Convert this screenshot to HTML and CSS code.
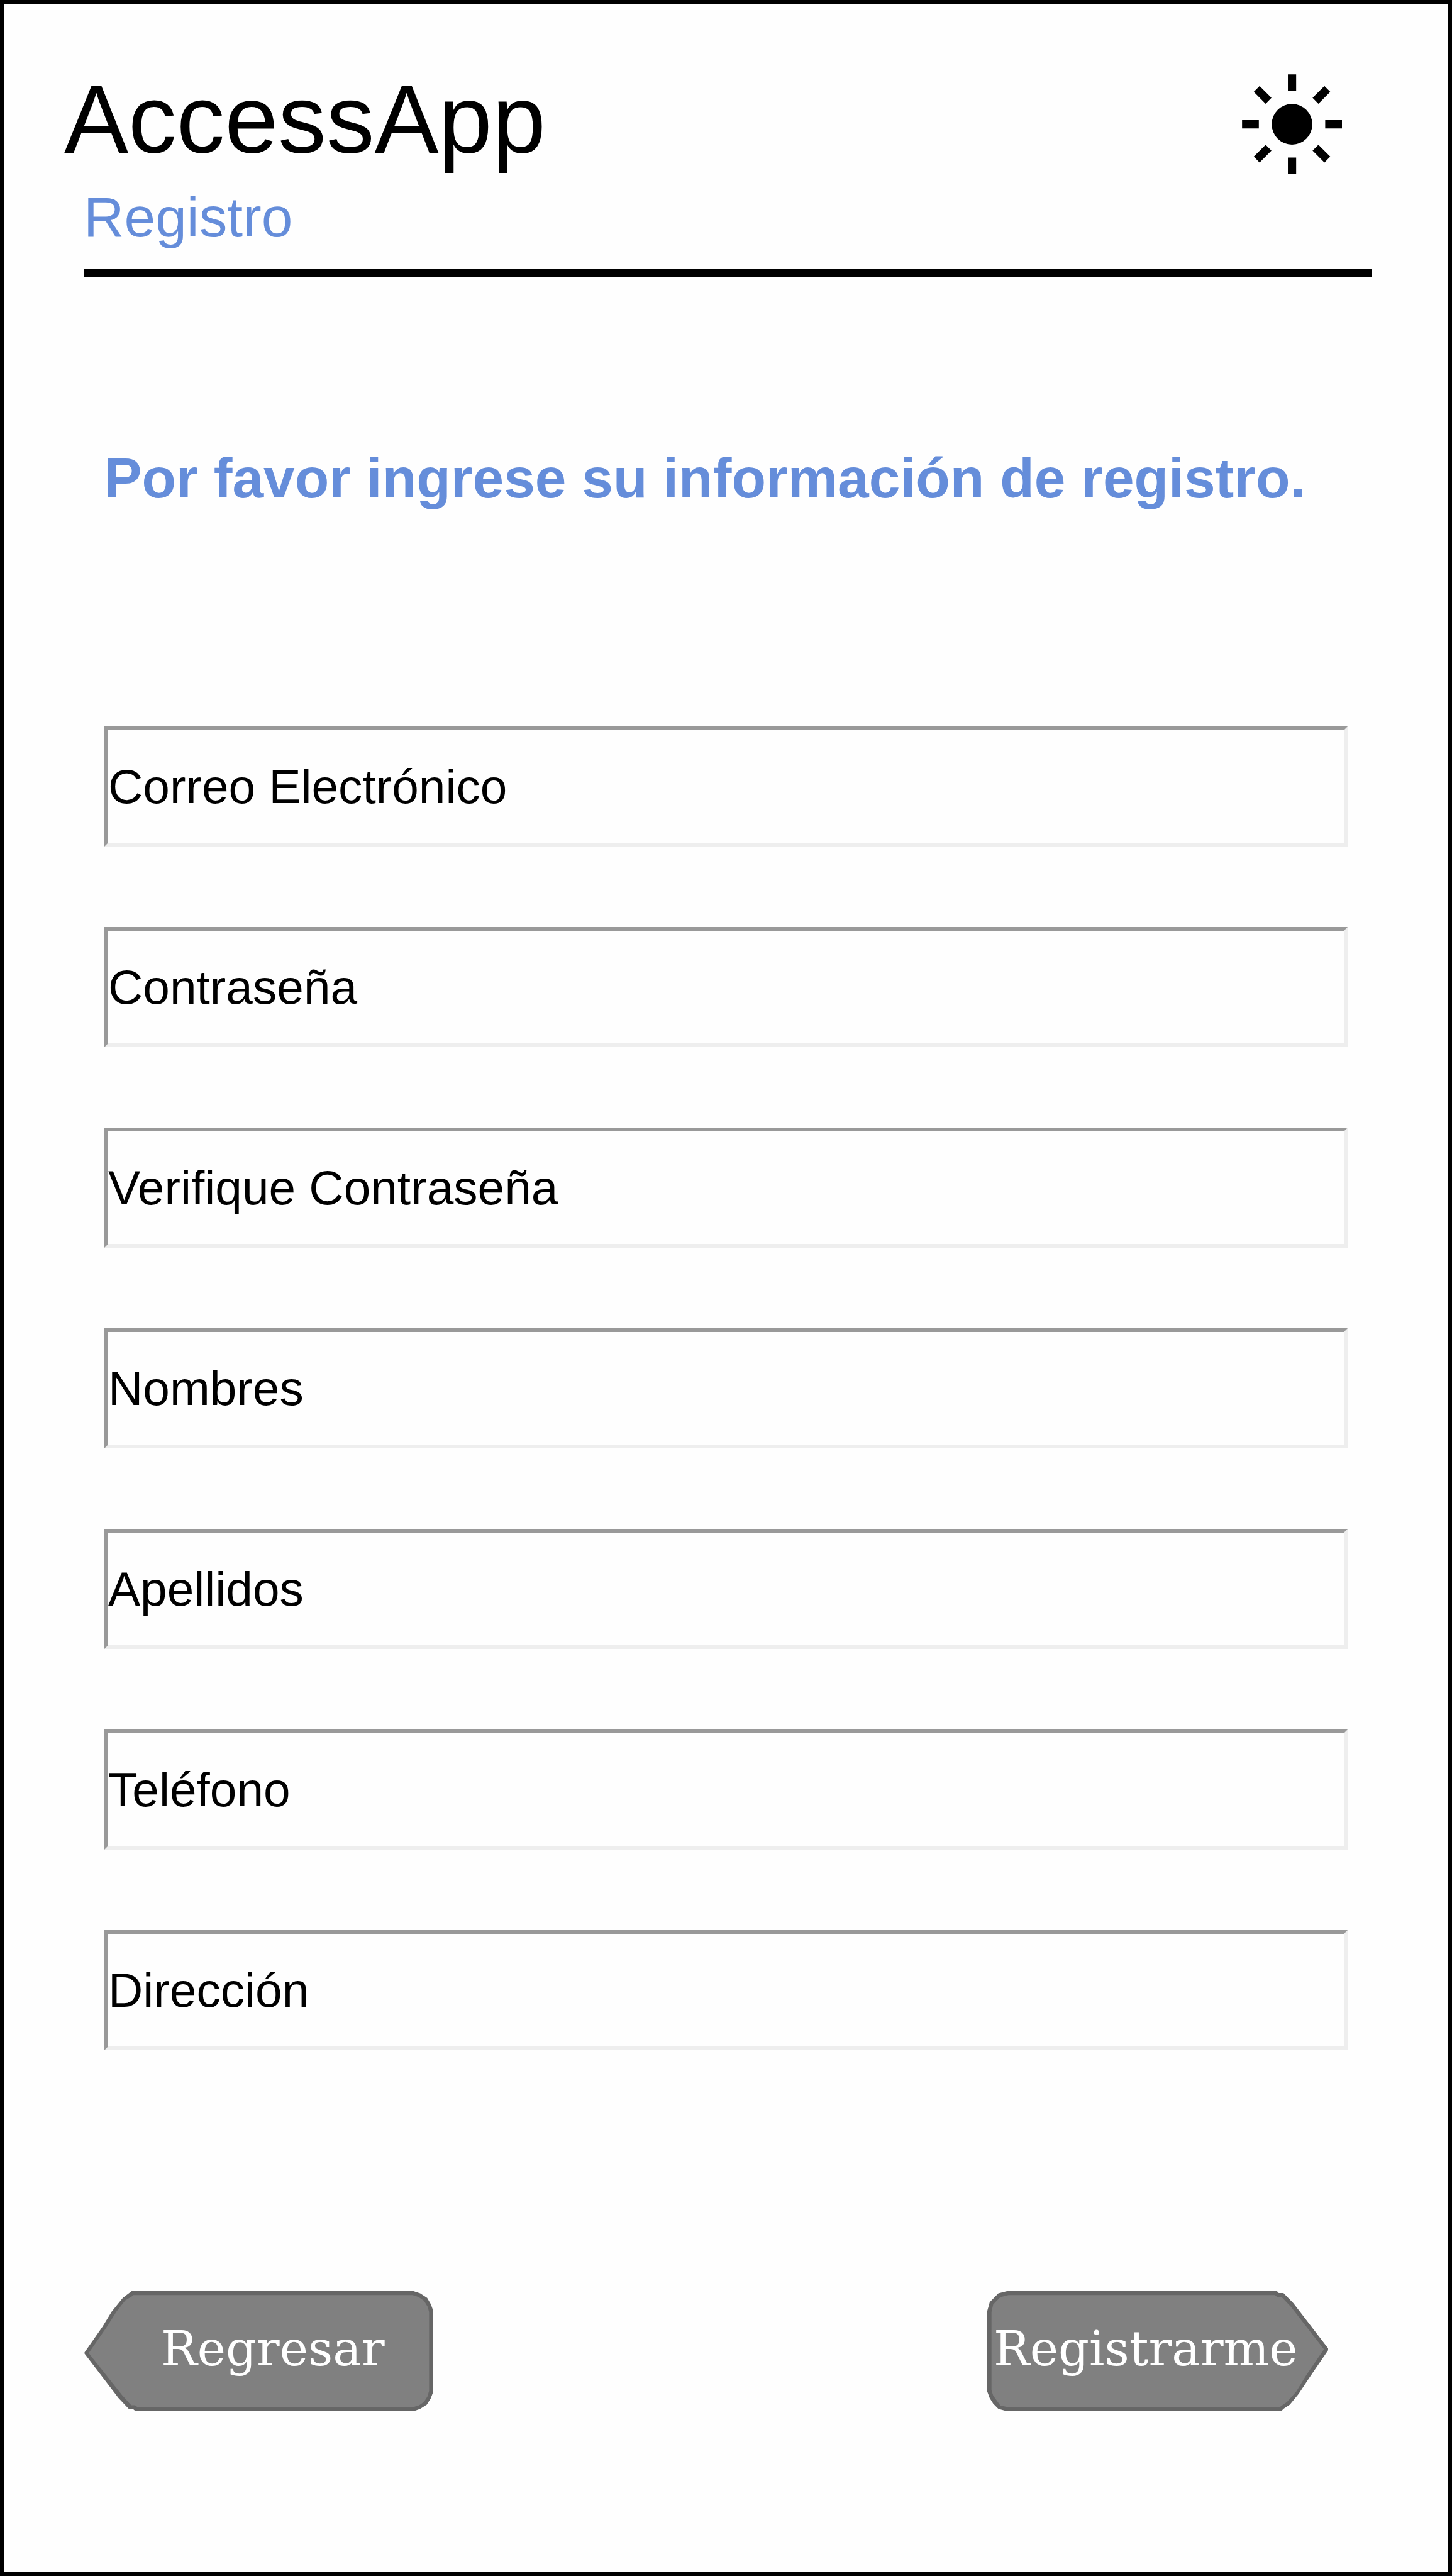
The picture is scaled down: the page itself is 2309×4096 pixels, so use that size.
FILE: index.html
```html
<!DOCTYPE html>
<html lang="es">
<head>
<meta charset="utf-8">
<title>AccessApp - Registro</title>
<link rel="stylesheet" href="styles.css">
</head>
<body>
<main class="screen">
  <header class="header">
    <div class="brand">
      <h1 class="title">AccessApp</h1>
      <p class="section">Registro</p>
    </div>
    <svg class="sun" viewBox="-106 -106 212 212" aria-hidden="true">
      <circle r="43"/>
      <g stroke="#000" stroke-width="17.5">
        <path d="M0-105.8V-70.3M0 105.8V70.3M-105.8 0H-70.3M105.8 0H70.3"/>
        <path transform="rotate(45)" d="M0-105.8V-70.3M0 105.8V70.3M-105.8 0H-70.3M105.8 0H70.3"/>
      </g>
    </svg>
  </header>
  <h2 class="prompt">Por favor ingrese su información de registro.</h2>
  <form class="fields">
    <div class="field">Correo Electrónico</div>
    <div class="field">Contraseña</div>
    <div class="field">Verifique Contraseña</div>
    <div class="field">Nombres</div>
    <div class="field">Apellidos</div>
    <div class="field">Teléfono</div>
    <div class="field">Dirección</div>
  </form>
  <nav class="actions">
    <div class="button back">
      <svg class="shape" viewBox="0 0 739.5 254.7" preserveAspectRatio="none" aria-hidden="true">
        <polygon fill="#666" points="100.4,0 697.7,0 711.8,4.7 726.5,14.3 734.3,27.7 739.5,42 739.5,213 734.3,227 725.9,240.7 711.8,249.7 697.7,254.7 108.8,254.7 104,250.7 95.2,250.7 72.2,226.3 1,133 0,131.3 1,129.3 38.7,75.3 58,43.7 81.6,14.3"/>
        <polygon fill="#808080" points="103.6,8.5 695.6,8.5 708.2,12.3 719.7,20.3 727.5,33 730.6,44.3 730.6,211.7 727,223.7 719.7,235 709.2,242.3 695.6,246.3 113,246.3 107.7,242 99.4,242 80.5,221 9.4,131.3 49.2,73.7 68.5,43 86.8,19.7 101,11"/>
      </svg>
      <span class="label">Regresar</span>
    </div>
    <div class="button next">
      <svg class="shape" viewBox="0 0 722.3 254.7" preserveAspectRatio="none" aria-hidden="true">
        <polygon fill="#666" points="41.8,0 614,0 617.7,4 627.6,4 648.5,25.3 722.3,121.3 722.3,125.3 683.6,182 660,217.7 641.2,240.7 627.6,249.7 622.9,254.7 41.8,254.7 23.5,249.7 12.6,238.7 5.2,227 0,213 0,42 5.2,23.3 23.5,4.7"/>
        <polygon fill="#808080" points="45,8.3 609.8,8.3 614.5,12.7 624,12.7 643.3,33 713.4,123.3 675.7,178.7 654.8,213 635.5,234.7 619.2,246.3 45,246.3 27.7,242.7 12.6,221.7 8.9,210.3 8.9,44.3 12.6,28 27.7,12.7"/>
      </svg>
      <span class="label">Registrarme</span>
    </div>
  </nav>
</main>
</body>
</html>
```
FILE: styles.css
```css
* { box-sizing: border-box; }

body {
  margin: 0;
  background: #fefefe;
  font-family: Arial, "Liberation Sans", sans-serif;
  color: #000;
}

.screen {
  width: 2309px;
  height: 4096px;
  border: 6px solid #000;
  overflow: hidden;
}

.header {
  display: flex;
  justify-content: space-between;
  align-items: flex-start;
  height: 334px;
  margin: 100px 121px 0 128px;
  border-bottom: 13px solid #000;
}

.title {
  margin: 4px 0 0 -32px;
  font-size: 153.1px;
  font-weight: 400;
  line-height: 160px;
}

.section {
  margin: 25px 0 0 -1px;
  font-size: 89.3px;
  line-height: 100px;
  color: #658dda;
}

.sun {
  width: 159.2px;
  height: 159.2px;
  margin: 12.4px 47.8px 0 0;
}

.prompt {
  margin: 270px 0 0 160px;
  font-size: 89.3px;
  font-weight: 700;
  line-height: 100px;
  white-space: nowrap;
  color: #658dda;
}

.fields {
  display: flex;
  flex-direction: column;
  gap: 128px;
  width: 1977px;
  margin: 345px 0 0 160px;
}

.field {
  display: flex;
  align-items: center;
  height: 191px;
  border: 6px solid;
  border-color: #999 #eee #eee #999;
  font-size: 76.6px;
  white-space: nowrap;
}

.actions {
  display: flex;
  justify-content: space-between;
  width: 1978px;
  margin: 383px 0 0 128px;
  font-family: "DejaVu Serif", serif;
  font-size: 76.6px;
  color: #fff;
}

.button {
  display: grid;
  height: 191px;
}

.back { width: 555px; }
.next { width: 542px; }

.shape,
.label {
  grid-area: 1 / 1;
}

.shape {
  display: block;
  width: 100%;
  height: 191px;
}

.label {
  line-height: 184px;
  white-space: nowrap;
}

.back .label { padding-left: 122px; }
.next .label { padding-left: 10px; }
```
